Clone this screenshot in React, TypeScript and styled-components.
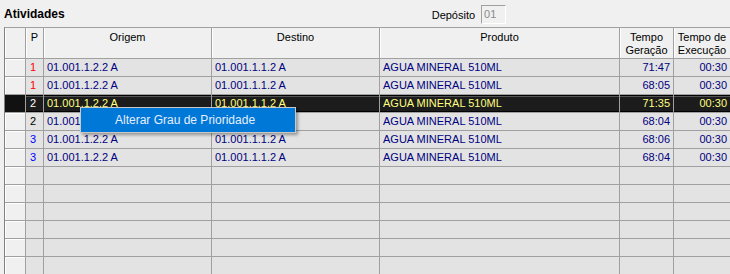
import styled, { createGlobalStyle } from 'styled-components';

const GlobalStyle = createGlobalStyle`
    body {
        margin: 0;
        background: #f0f0f0;
        font-family: 'Liberation Sans', Arial, sans-serif;
        overflow: hidden;
    }
`;

const COLS = '21px 18px 168px 168px 240px 54px 57px';

const Page = styled.div`
    width: 730px;
    height: 274px;
    position: relative;
    overflow: hidden;
`;

const TopBar = styled.div`
    height: 27px;
    display: flex;
    align-items: flex-start;
    padding: 0 4px;
    box-sizing: border-box;
`;

const Title = styled.div`
    font-weight: bold;
    font-size: 12px;
    margin-top: 7px;
    color: #000;
`;

const DepositoGroup = styled.div`
    display: flex;
    align-items: center;
    gap: 6px;
    margin-left: 367px;
    margin-top: 5px;
    font-size: 11px;
`;

const DepositoInput = styled.div`
    width: 21px;
    height: 17px;
    border: 1px solid #a0a0a0;
    border-right-color: #fff;
    border-bottom-color: #fff;
    background: #f0f0f0;
    color: #8a8a8a;
    font-size: 11px;
    line-height: 17px;
    padding-left: 2px;
    box-sizing: content-box;
`;

const Grid = styled.div`
    margin-left: 4px;
    border-left: 1px solid #808080;
    border-top: 1px solid #a0a0a0;
    box-shadow: inset 1px 0 0 #fff;
`;

const Row = styled.div<{ selected?: boolean; header?: boolean }>`
    display: grid;
    grid-template-columns: ${COLS};
    height: ${({ header }) => (header ? '31px' : '18px')};
    background: ${({ selected, header }) =>
        selected ? '#1c1c1c' : header ? '#f0f0f0' : '#e3e3e3'};
    ${({ selected }) =>
        selected &&
        `
        box-shadow: inset 0 1px 0 #000, inset 0 2px 0 #555, inset 0 -2px 0 #000, inset 0 -1px 0 #a0a0a0;
    `}
`;

const Cell = styled.div<{
    align?: 'left' | 'right' | 'center';
    color?: string;
    indicator?: boolean;
    selected?: boolean;
}>`
    border-right: 1px solid #a0a0a0;
    border-bottom: 1px solid #a0a0a0;
    font-size: 11px;
    line-height: 17px;
    padding: 0 3px;
    white-space: nowrap;
    overflow: hidden;
    text-align: ${({ align }) => align ?? 'left'};
    color: ${({ color }) => color ?? '#000080'};
    background: ${({ indicator, selected }) =>
        indicator ? (selected ? '#111' : '#f0f0f0') : 'transparent'};
    ${({ indicator, selected }) =>
        indicator && !selected && 'box-shadow: inset 1px 1px 0 #fff;'}
`;

const HeadCell = styled.div`
    border-right: 1px solid #a0a0a0;
    border-bottom: 1px solid #a0a0a0;
    box-shadow: inset 1px 0 0 #fff;
    font-size: 11px;
    line-height: 13px;
    padding-top: 3px;
    text-align: center;
    color: #000;
    white-space: nowrap;
    overflow: hidden;
`;

const Menu = styled.div`
    position: absolute;
    left: 80px;
    top: 107px;
    width: 180px;
    height: 24px;
    background: #0078d7;
    border: 1px solid #c8c8c8;
    box-shadow: 2px 2px 3px rgba(0, 0, 0, 0.35);
    color: #e6efff;
    font-size: 12px;
    line-height: 24px;
    padding-left: 34px;
    box-sizing: content-box;
`;

type Item = { p: number; geracao: string };

const data: Item[] = [
    { p: 1, geracao: '71:47' },
    { p: 1, geracao: '68:05' },
    { p: 2, geracao: '71:35' },
    { p: 2, geracao: '68:04' },
    { p: 3, geracao: '68:06' },
    { p: 3, geracao: '68:04' }
];

const SELECTED = 2;
const pColor = (p: number) => (p === 1 ? '#ff0000' : p === 2 ? '#000' : '#0000ff');

export default function App() {
    return (
        <Page>
            <GlobalStyle />
            <TopBar>
                <Title>Atividades</Title>
                <DepositoGroup>
                    <span>Depósito</span>
                    <DepositoInput>01</DepositoInput>
                </DepositoGroup>
            </TopBar>
            <Grid>
                <Row header>
                    <HeadCell />
                    <HeadCell>P</HeadCell>
                    <HeadCell>Origem</HeadCell>
                    <HeadCell>Destino</HeadCell>
                    <HeadCell>Produto</HeadCell>
                    <HeadCell>
                        Tempo
                        <br />
                        Geração
                    </HeadCell>
                    <HeadCell>
                        Tempo de
                        <br />
                        Execução
                    </HeadCell>
                </Row>
                {data.map((item, i) => {
                    const sel = i === SELECTED;
                    const text = sel ? '#ffff80' : undefined;
                    return (
                        <Row key={i} selected={sel}>
                            <Cell indicator selected={sel} />
                            <Cell color={sel ? '#fff' : pColor(item.p)} style={{ paddingLeft: 4 }}>
                                {item.p}
                            </Cell>
                            <Cell color={text}>01.001.1.2.2 A</Cell>
                            <Cell color={text}>01.001.1.1.2 A</Cell>
                            <Cell color={text}>AGUA MINERAL 510ML</Cell>
                            <Cell color={text} align="right">
                                {item.geracao}
                            </Cell>
                            <Cell color={text} align="right">
                                00:30
                            </Cell>
                        </Row>
                    );
                })}
                {Array.from({ length: 7 }).map((_, i) => (
                    <Row key={`e${i}`}>
                        <Cell indicator />
                        <Cell />
                        <Cell />
                        <Cell />
                        <Cell />
                        <Cell />
                        <Cell />
                    </Row>
                ))}
            </Grid>
            <Menu>Alterar Grau de Prioridade</Menu>
        </Page>
    );
}
